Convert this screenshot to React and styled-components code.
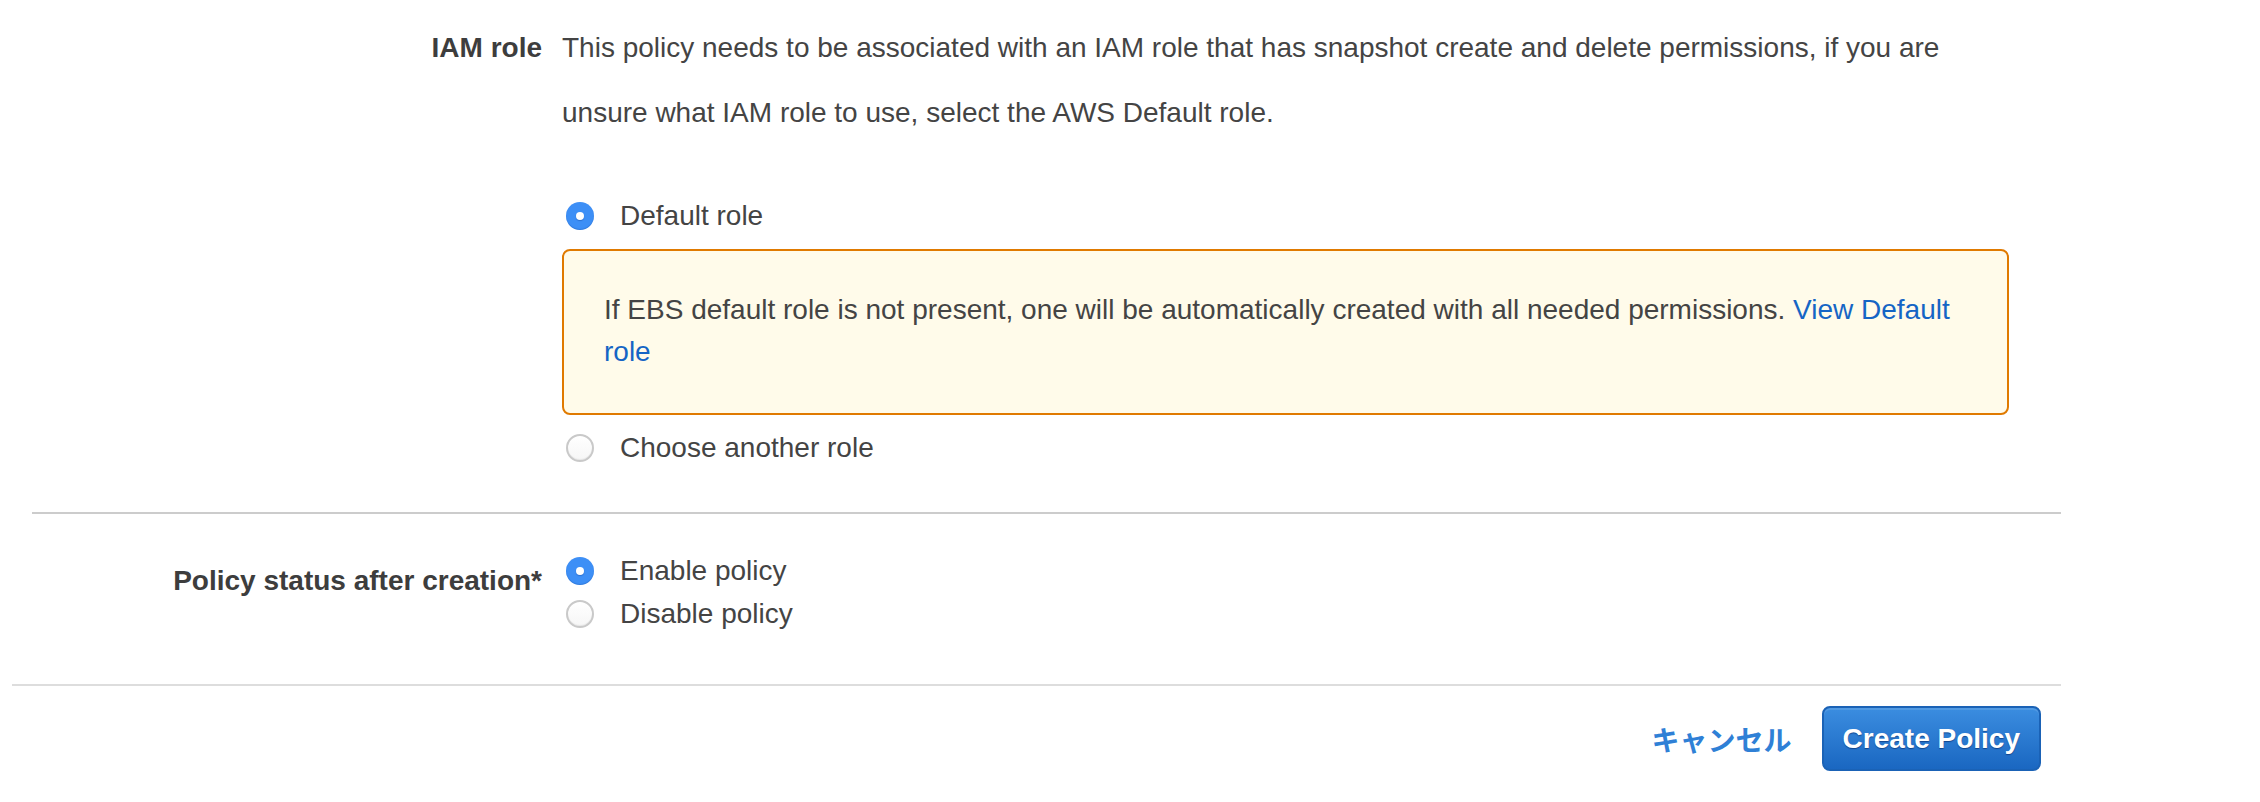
import React from "react";
import styled, { createGlobalStyle } from "styled-components";

const GlobalStyle = createGlobalStyle`
  html, body {
    margin: 0;
    padding: 0;
    background: #ffffff;
  }
  body {
    font-family: "Liberation Sans", Arial, Helvetica, sans-serif;
    font-size: 28px;
    color: #444444;
    -webkit-font-smoothing: antialiased;
  }
  * { box-sizing: border-box; }
`;

const Page = styled.div`
  width: 2260px;
  height: 802px;
  overflow: hidden;
  display: flex;
  flex-direction: column;
`;

const FormSection = styled.section`
  display: grid;
  grid-template-columns: 510px 1447px;
  column-gap: 20px;
  margin-left: 32px;
  width: 2029px;
  padding-top: ${(p) => p.$top}px;
  padding-bottom: ${(p) => p.$bottom}px;
  border-bottom: ${(p) => (p.$divider ? "2px solid #cccccc" : "none")};
`;

const Label = styled.div`
  text-align: right;
  font-weight: 700;
  color: #3d3d3d;
  line-height: ${(p) => p.$lh}px;
  margin-top: ${(p) => p.$offset || 0}px;
  white-space: nowrap;
`;

const Content = styled.div`
  display: flex;
  flex-direction: column;
  align-items: flex-start;
`;

const Description = styled.p`
  margin: 0 0 50px 0;
  line-height: 65px;
  color: #444444;
`;

const RadioRow = styled.label`
  display: flex;
  align-items: center;
  height: ${(p) => p.$h || 42}px;
  gap: 26px;
  padding-left: 4px;
  color: #444444;
  cursor: pointer;
`;

const RadioDot = styled.span`
  position: relative;
  flex: none;
  width: 28px;
  height: 28px;
  border-radius: 50%;
  ${(p) =>
    p.$checked
      ? `
    background: #3d8ff6;
    box-shadow: inset 0 -1px 1px rgba(0, 60, 150, 0.25);
    &::after {
      content: "";
      position: absolute;
      left: 10px;
      top: 10px;
      width: 8px;
      height: 8px;
      border-radius: 50%;
      background: #ffffff;
      box-shadow: 0 1px 1px rgba(0, 40, 120, 0.3);
    }
  `
      : `
    background: linear-gradient(#ffffff, #f6f6f6);
    border: 2px solid #c9c9c9;
    box-shadow: inset 0 -1px 1px rgba(0, 0, 0, 0.06);
  `}
`;

const Warning = styled.div`
  align-self: stretch;
  margin: 12px 0;
  padding: 38px 40px 40px 40px;
  border: 2px solid #e07a00;
  border-radius: 8px;
  background: #fffbea;
  line-height: 42px;
  color: #444444;
`;

const Link = styled.a`
  color: #1565c5;
  text-decoration: none;
`;

const Footer = styled.footer`
  margin-left: 12px;
  width: 2049px;
  border-top: 2px solid #dddddd;
  padding: 20px 20px 0 0;
  display: flex;
  justify-content: flex-end;
  align-items: center;
  gap: 30px;
`;

const CancelLink = styled.a`
  font-family: "Noto Sans CJK JP", "Liberation Sans", sans-serif;
  font-weight: 700;
  font-size: 28px;
  color: #2f80d6;
  text-decoration: none;
  line-height: 42px;
`;

const PrimaryButton = styled.button`
  height: 65px;
  padding: 0 19px;
  border: 2px solid #1a62b6;
  border-radius: 8px;
  background: linear-gradient(#3b8de0, #1a67c1);
  box-shadow: inset 0 2px 0 rgba(255, 255, 255, 0.12);
  color: #ffffff;
  font-family: "Liberation Sans", Arial, sans-serif;
  font-weight: 700;
  font-size: 28px;
  text-shadow: 0 1px 1px rgba(0, 30, 90, 0.55);
  cursor: pointer;
`;

function Radio({ checked, children, h }) {
  return (
    <RadioRow $h={h}>
      <RadioDot $checked={checked} />
      <span>{children}</span>
    </RadioRow>
  );
}

export default function App() {
  return (
    <>
      <GlobalStyle />
      <Page>
        <FormSection $top={15} $bottom={43} $divider>
          <Label $lh={65}>IAM role</Label>
          <Content>
            <Description>
              This policy needs to be associated with an IAM role that has
              snapshot create and delete permissions, if you are unsure what
              IAM role to use, select the AWS Default role.
            </Description>
            <Radio checked>Default role</Radio>
            <Warning>
              If EBS default role is not present, one will be automatically
              created with all needed permissions.{" "}
              <Link href="#">View Default</Link>
              <br />
              <Link href="#">role</Link>
            </Warning>
            <Radio>Choose another role</Radio>
          </Content>
        </FormSection>

        <FormSection $top={35} $bottom={49}>
          <Label $lh={43} $offset={10}>
            Policy status after creation*
          </Label>
          <Content>
            <Radio checked h={43}>
              Enable policy
            </Radio>
            <Radio h={43}>Disable policy</Radio>
          </Content>
        </FormSection>

        <Footer>
          <CancelLink href="#">キャンセル</CancelLink>
          <PrimaryButton type="button">Create Policy</PrimaryButton>
        </Footer>
      </Page>
    </>
  );
}
